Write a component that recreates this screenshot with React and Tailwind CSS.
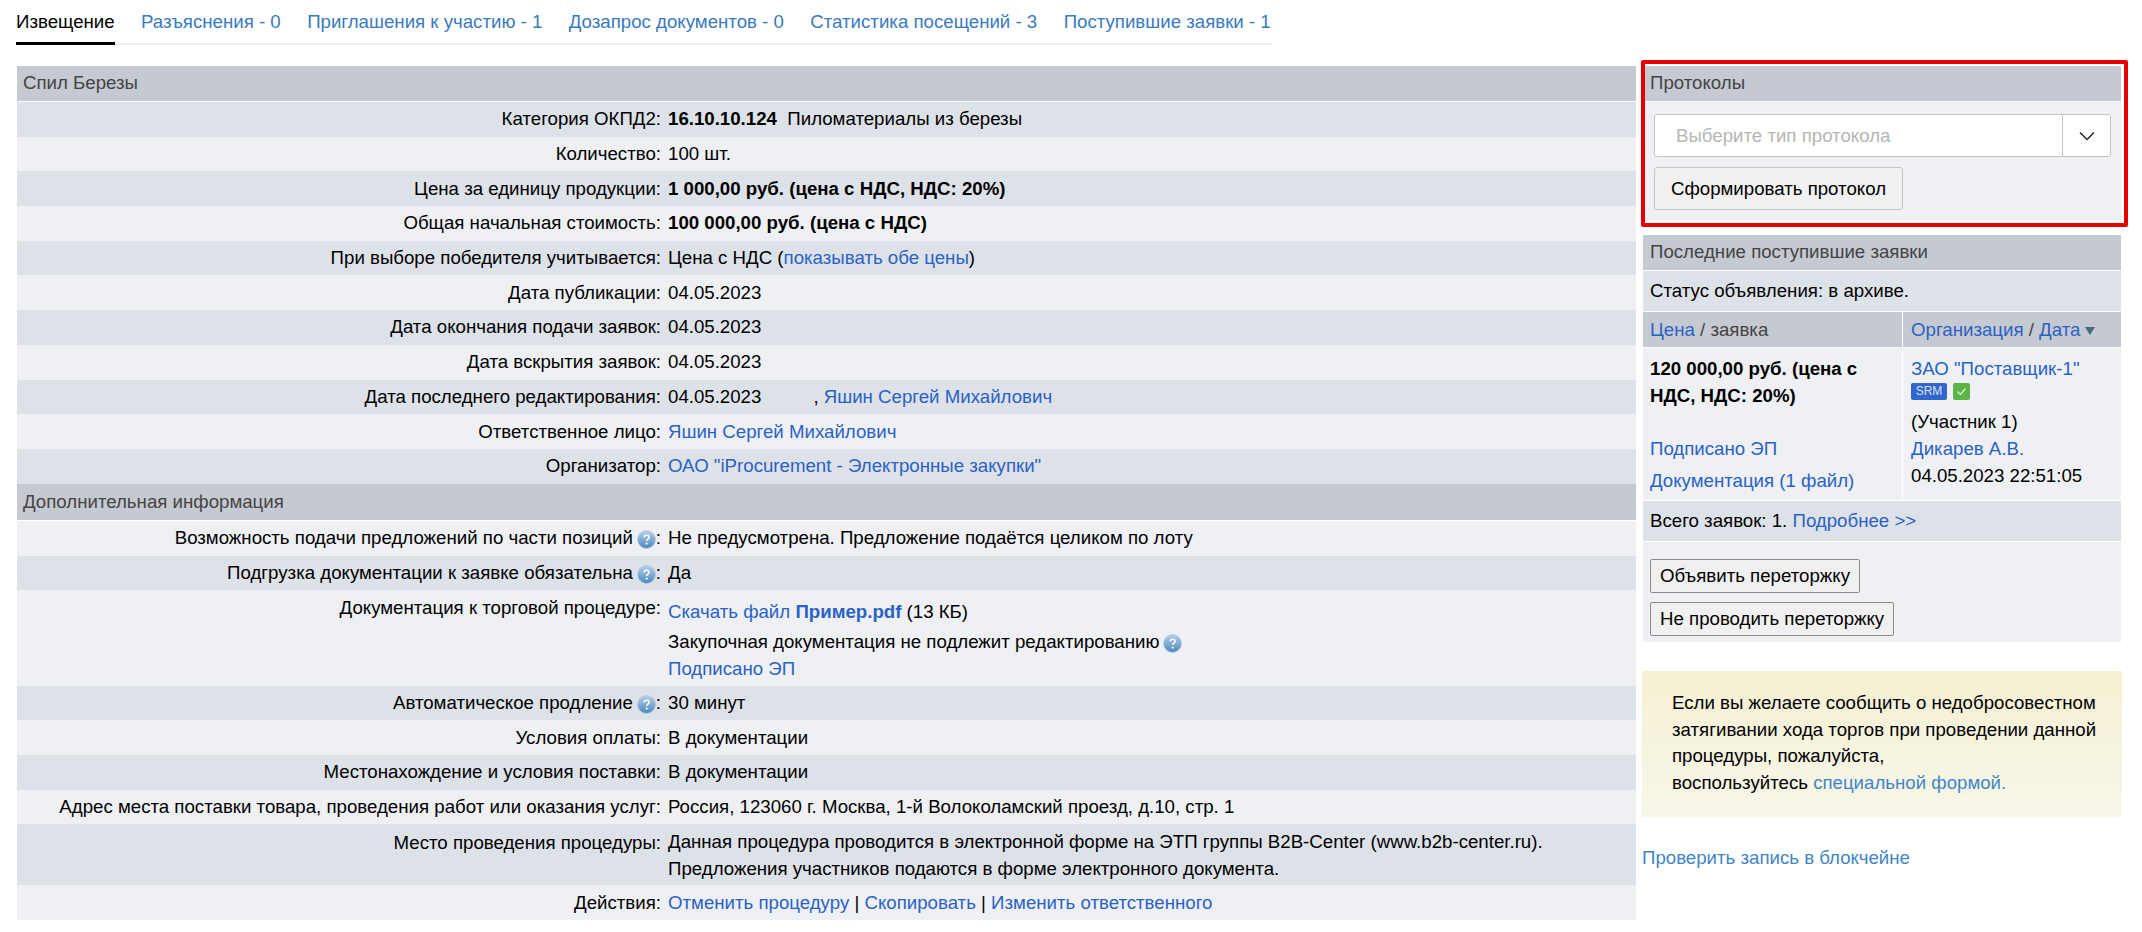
import React from "react";

const Help = ({ id }) => (
  <svg width="19" height="19" viewBox="0 0 19 19" className="ml-[4px] inline-block align-[-5px]">
    <defs>
      <linearGradient id={id} x1="0" y1="0" x2="0" y2="1">
        <stop offset="0" stopColor="#b8d0e8" />
        <stop offset="1" stopColor="#4a88bf" />
      </linearGradient>
    </defs>
    <circle cx="9.5" cy="9.5" r="9" fill={`url(#${id})`} stroke="#b7c9da" strokeWidth="0.8" />
    <path d="M7 7.4c.2-1.5 1.3-2.2 2.6-2.2 1.5 0 2.5.9 2.5 2 0 1.9-2.4 1.9-2.4 3.8" fill="none" stroke="#fff" strokeWidth="1.5" />
    <circle cx="9.7" cy="13.6" r="1.05" fill="#fff" />
  </svg>
);

const A = ({ children, className = "" }) => <a className={`text-[#2a62c4] ${className}`}>{children}</a>;

const Row = ({ label, children, alt, h = "h-[34.7px]", top, labelClass = "" }) => (
  <div className={`flex ${h} ${top ? "items-start" : "items-center"} ${alt ? "bg-[#dde1e8]" : "bg-[#eef0f4]"}`}>
    <div className={`w-[644px] shrink-0 text-right ${labelClass}`}>{label}</div>
    <div className="ml-[7px] min-w-0">{children}</div>
  </div>
);

const Head = ({ children, className = "h-[36px] pl-[5px] pb-[1px]" }) => (
  <div className={`flex items-center border-b border-white bg-[#c5c9d1] text-[#444444] ${className}`}>{children}</div>
);

const Btn = ({ children, className = "" }) => (
  <button className={`block rounded-[2px] border border-[#8a8a8a] bg-[#f0f0f0] px-[9px] text-black ${className}`}>{children}</button>
);

const Tab = ({ children }) => <a className="flex h-[43px] shrink-0 items-center whitespace-nowrap">{children}</a>;

export default function App() {
  return (
    <div className="relative h-[932px] w-[2142px] overflow-hidden bg-white font-['Liberation_Sans',Arial,sans-serif] text-[18.67px] text-black">
      <nav className="ml-[16px] flex h-[45px] w-[1256px] gap-[26.4px] border-b-2 border-[#eeeeee] text-[#3a7abd]">
        <a className="-mb-[2px] flex h-[45px] shrink-0 items-center whitespace-nowrap border-b-[3px] border-black pt-[1px] text-black">Извещение</a>
        <Tab>Разъяснения - 0</Tab>
        <Tab>Приглашения к участию - 1</Tab>
        <Tab>Дозапрос документов - 0</Tab>
        <Tab>Статистика посещений - 3</Tab>
        <Tab>Поступившие заявки - 1</Tab>
      </nav>

      <div className="mt-[21px] flex items-start pl-[17px]">
        <main className="w-[1619px] shrink-0">
          <Head className="h-[36px] pb-[1px] pl-[6px]">Спил Березы</Head>
          <Row alt label="Категория ОКПД2:"><b>16.10.10.124</b>&nbsp; Пиломатериалы из березы</Row>
          <Row label="Количество:">100 шт.</Row>
          <Row alt label="Цена за единицу продукции:"><b>1 000,00 руб. (цена с НДС, НДС: 20%)</b></Row>
          <Row label="Общая начальная стоимость:"><b>100 000,00 руб. (цена с НДС)</b></Row>
          <Row alt label="При выборе победителя учитывается:">Цена с НДС (<A>показывать обе цены</A>)</Row>
          <Row label="Дата публикации:">04.05.2023</Row>
          <Row alt label="Дата окончания подачи заявок:">04.05.2023</Row>
          <Row label="Дата вскрытия заявок:">04.05.2023</Row>
          <Row alt label="Дата последнего редактирования:">
            04.05.2023<span className="inline-block w-[52px]" />, <A>Яшин Сергей Михайлович</A>
          </Row>
          <Row label="Ответственное лицо:"><A>Яшин Сергей Михайлович</A></Row>
          <Row alt label="Организатор:"><A>ОАО "iProcurement - Электронные закупки"</A></Row>
          <Head className="h-[37px] pl-[6px]">Дополнительная информация</Head>
          <Row h="h-[35px]" label={<>Возможность подачи предложений по части позиций<Help id="h1" />:</>}>
            Не предусмотрена. Предложение подаётся целиком по лоту
          </Row>
          <Row alt h="h-[34px]" label={<>Подгрузка документации к заявке обязательна<Help id="h2" />:</>}>Да</Row>
          <Row top h="h-[96px]" labelClass="pt-[4px]" label="Документация к торговой процедуре:">
            <div className="pt-[8px] leading-[27px]">
              <A>Скачать файл <b>Пример.pdf</b></A> (13 КБ)
            </div>
            <div className="mt-[3px] leading-[27px]">Закупочная документация не подлежит редактированию<Help id="h3" /></div>
            <div className="leading-[27px]"><A>Подписано ЭП</A></div>
          </Row>
          <Row alt label={<>Автоматическое продление<Help id="h4" />:</>}>30 минут</Row>
          <Row label="Условия оплаты:">В документации</Row>
          <Row alt label="Местонахождение и условия поставки:">В документации</Row>
          <Row label="Адрес места поставки товара, проведения работ или оказания услуг:">
            Россия, 123060 г. Москва, 1-й Волоколамский проезд, д.10, стр. 1
          </Row>
          <Row alt top h="h-[61px]" labelClass="pt-[5px]" label="Место проведения процедуры:">
            <div className="pt-[4px] leading-[27px]">
              Данная процедура проводится в электронной форме на ЭТП группы B2B-Center (www.b2b-center.ru).
              <br />
              Предложения участников подаются в форме электронного документа.
            </div>
          </Row>
          <Row label="Действия:">
            <A>Отменить процедуру</A> | <A>Скопировать</A> | <A>Изменить ответственного</A>
          </Row>
        </main>

        <aside className="ml-[7px] w-[478px] shrink-0">
          <section className="ml-[2px] h-[154px] bg-[#eef0f4]">
            <Head>Протоколы</Head>
            <div className="px-[9px] pt-[12px]">
              <div className="flex h-[43px] w-[457px] items-center rounded-[3px] border border-[#c4c4c4] bg-white">
                <span className="flex-1 pl-[21px] text-[#b5b5b5]">Выберите тип протокола</span>
                <span className="flex h-full w-[48px] items-center justify-center border-l border-[#c4c4c4]">
                  <svg width="16" height="10" viewBox="0 0 16 10">
                    <path d="M1 1.5l7 7 7-7" fill="none" stroke="#222" strokeWidth="1.5" />
                  </svg>
                </span>
              </div>
              <button className="mt-[10px] flex h-[43px] w-[249px] items-center justify-center rounded-[3px] border border-[#c4c4c4] bg-[#f1f1f1] text-black">
                Сформировать протокол
              </button>
            </div>
          </section>

          <section className="mt-[15px] bg-[#eef0f4]">
            <Head className="h-[36px] pb-[1px] pl-[7px]">Последние поступившие заявки</Head>
            <div className="flex h-[41px] items-center border-b border-white bg-[#dde1e8] pl-[7px]">Статус объявления: в архиве.</div>
            <div className="flex h-[36px] border-b border-white bg-[#c5c9d1] text-[#444444]">
              <div className="flex w-[260px] items-center border-r border-white pl-[7px]">
                <A>Цена</A>&nbsp;/ заявка
              </div>
              <div className="flex items-center pl-[8px]">
                <A>Организация</A>&nbsp;/&nbsp;<A>Дата</A>
                <svg width="10" height="8" viewBox="0 0 10 8" className="ml-[5px] mt-[3px]">
                  <path d="M0 0h10L5 8z" fill="#3f6f80" />
                </svg>
              </div>
            </div>
            <div className="flex h-[153px] border-b border-white">
              <div className="w-[260px] border-r border-white pl-[7px] pr-[4px] pt-[7px]">
                <div className="font-bold leading-[27px]">120 000,00 руб. (цена с НДС, НДС: 20%)</div>
                <div className="mt-[26px] leading-[27px]"><A>Подписано ЭП</A></div>
                <div className="mt-[5px] leading-[27px]"><A>Документация (1 файл)</A></div>
              </div>
              <div className="flex-1 pl-[8px] pt-[7px] leading-[27px]">
                <div><A>ЗАО "Поставщик-1"</A></div>
                <div className="flex h-[18px] items-center gap-[6px]">
                  <span className="flex h-[17px] w-[36px] items-center justify-center rounded-[2px] bg-[#3366cc] text-[12px] leading-none text-[#d5e0f5]">SRM</span>
                  <span className="flex h-[17px] w-[17px] items-center justify-center rounded-[2px] bg-[#5cb346]">
                    <svg width="11" height="9" viewBox="0 0 11 9"><path d="M1.5 4.5l3 3 5-6" fill="none" stroke="#d8f0d2" strokeWidth="1.2" /></svg>
                  </span>
                </div>
                <div className="mt-[8px]">(Участник 1)</div>
                <div><A>Дикарев А.В.</A></div>
                <div>04.05.2023 22:51:05</div>
              </div>
            </div>
            <div className="flex h-[41px] items-center border-b border-white bg-[#dde1e8] pl-[7px]">
              Всего заявок: 1.&nbsp;<A>Подробнее &gt;&gt;</A>
            </div>
            <div className="h-[100px] pl-[7px] pt-[17px]">
              <Btn className="h-[34px]">Объявить переторжку</Btn>
              <Btn className="mt-[9px] h-[34px]">Не проводить переторжку</Btn>
            </div>
          </section>

          <section className="-ml-[1px] mt-[29px] h-[146px] w-[480px] bg-gradient-to-b from-[#f6f0d2] to-[#f7f7ea] pl-[30px] pr-[10px] pt-[19px] leading-[26.7px]">
            Если вы желаете сообщить о недобросовестном затягивании хода торгов при проведении данной процедуры, пожалуйста,
            <br />
            воспользуйтесь <a className="text-[#4285c4]">специальной формой.</a>
          </section>

          <a className="-ml-[1px] mt-[27px] block text-[#4285c4]">Проверить запись в блокчейне</a>
        </aside>
      </div>

      <div className="pointer-events-none absolute left-[1641px] top-[60px] h-[167px] w-[487px] rounded-[2px] border-[4px] border-[#e60000]" />
    </div>
  );
}
